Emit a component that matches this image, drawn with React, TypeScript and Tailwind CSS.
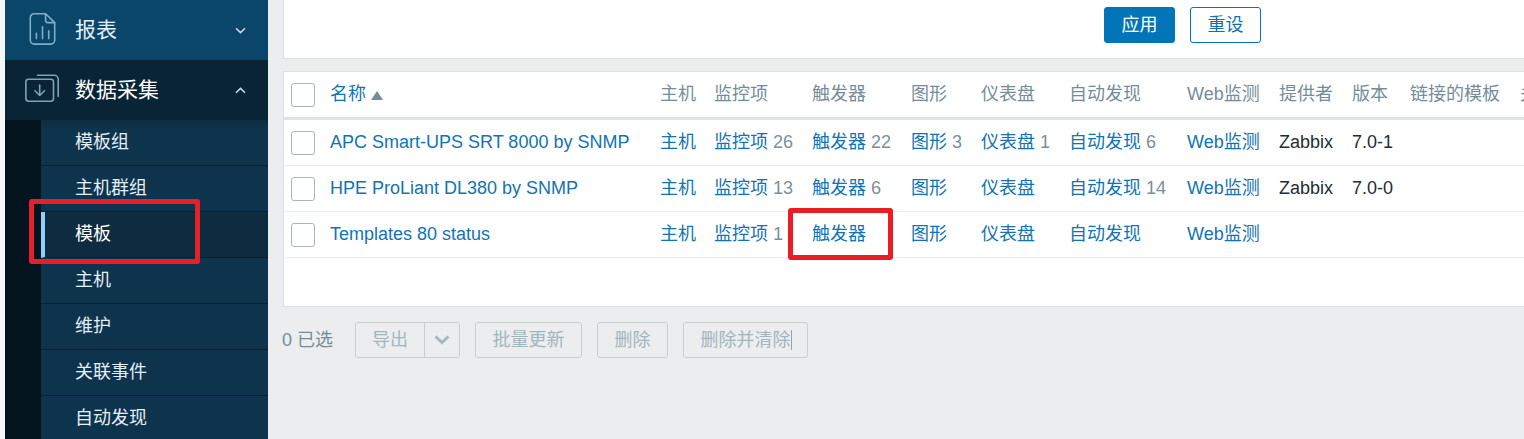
import type { ReactNode } from 'react';

const COLUMNS =
  'grid grid-cols-[46px_330px_54px_98px_99px_70px_88px_118px_92px_73px_58px_110px_120px] items-center';

type Template = {
  name: string;
  items: string;
  triggers: string;
  graphs: string;
  dashboards: string;
  discovery: string;
  vendor: string;
  version: string;
};

const templates: Template[] = [
  { name: 'APC Smart-UPS SRT 8000 by SNMP', items: '26', triggers: '22', graphs: '3', dashboards: '1', discovery: '6', vendor: 'Zabbix', version: '7.0-1' },
  { name: 'HPE ProLiant DL380 by SNMP', items: '13', triggers: '6', graphs: '', dashboards: '', discovery: '14', vendor: 'Zabbix', version: '7.0-0' },
  { name: 'Templates 80 status', items: '1', triggers: '', graphs: '', dashboards: '', discovery: '', vendor: '', version: '' },
];

const submenu = ['模板组', '主机群组', '模板', '主机', '维护', '关联事件', '自动发现'];

function ReportIcon() {
  return (
    <svg width="36" height="36" viewBox="0 0 36 36" fill="none" stroke="#7eaecb" strokeWidth="1.6" strokeLinecap="round" strokeLinejoin="round">
      <path d="M20.6 2.7H9.3a4 4 0 0 0-4 4v22.4a4 4 0 0 0 4 4h16.4a4 4 0 0 0 4-4V11.6L20.6 2.7Z" />
      <path d="M20.6 2.7v6.9a2 2 0 0 0 2 2h7.1M11.4 22.2v5.4M17.5 15.8v11.8M23.7 19.7v7.9" />
    </svg>
  );
}

function CollectionIcon() {
  return (
    <svg width="36" height="36" viewBox="0 0 36 36" fill="none" stroke="#7fa3b5" strokeWidth="1.6" strokeLinecap="round" strokeLinejoin="round">
      <rect x="0.9" y="8.2" width="27.6" height="22" rx="2.6" />
      <path d="M12.6 4.3h16.6a4 4 0 0 1 4 4v17.2M14.7 14v10.4M9.9 19.8l4.8 4.7 4.8-4.7" />
    </svg>
  );
}

function Chevron({ up = false }: { up?: boolean }) {
  return (
    <svg width="11" height="7" viewBox="0 0 11 7" fill="none" stroke="#c9dbe6" strokeWidth="1.5">
      <path d={up ? 'M1 5.8 5.5 1.4 10 5.8' : 'M1 1.2 5.5 5.6 10 1.2'} />
    </svg>
  );
}

function Checkbox() {
  return <span className="mt-0.5 ml-[7px] block size-6 rounded-[3px] border border-[#a8b5bd] bg-white" />;
}

function Link({ children, count = '' }: { children: ReactNode; count?: string }) {
  return (
    <span>
      <span className="text-[#1274b0]">{children}</span>
      {count && <span className="text-[#7d8f99]"> {count}</span>}
    </span>
  );
}

function FooterButton({ children, className }: { children: ReactNode; className: string }) {
  return (
    <button className={`flex h-9 items-center justify-center rounded-[3px] border border-[#c8d0d4] text-[#a5b5bd] ${className}`}>
      {children}
    </button>
  );
}

function Sidebar() {
  return (
    <aside className="ml-[5px] flex w-[263px] shrink-0 flex-col bg-[#03141e]">
      <div className="flex h-[60px] shrink-0 items-center bg-[#0a466a] pr-[22px] pl-5 text-[21px] text-[#e3eef5]">
        <div className="w-[50px] pb-0.5"><ReportIcon /></div>
        <span className="grow">报表</span>
        <Chevron />
      </div>
      <div className="flex h-[60px] shrink-0 items-center bg-[#092435] pr-[22px] pl-5 text-[21px] text-white">
        <div className="w-[50px] pb-0.5"><CollectionIcon /></div>
        <span className="grow">数据采集</span>
        <Chevron up />
      </div>
      <nav className="ml-9 flex flex-col">
        {submenu.map((item) => (
          <div
            key={item}
            className={
              item === '模板'
                ? 'flex h-[46px] shrink-0 items-center border-b border-[#06202e] border-l-4 border-l-[#8ccfff] bg-[#0d2c40] pb-px pl-[30px] text-white'
                : 'flex h-[46px] shrink-0 items-center border-b border-[#06202e] bg-[#0e344d] pb-px pl-[34px] text-[#e3eef5] first:bg-linear-to-b first:from-[#0c2b40] first:to-[#0e344d] first:to-20%'
            }
          >
            {item}
          </div>
        ))}
      </nav>
    </aside>
  );
}

export default function App() {
  return (
    <div className="relative flex h-[439px] w-[1524px] overflow-hidden bg-[#f6f7f8] font-['Liberation_Sans','Noto_Sans_CJK_SC',sans-serif] text-[18px] leading-6 whitespace-nowrap">
      <Sidebar />
      <main className="flex min-w-0 grow flex-col overflow-hidden bg-[#ebedef] pl-[15px]">
        <section className="flex h-[59px] shrink-0 gap-[15px] border-b border-l border-[#dde1e3] bg-white pt-[7px] pl-[820px]">
          <button className="h-9 w-[71px] rounded-[3px] border border-[#0275b8] bg-[#0275b8] text-white">应用</button>
          <button className="h-9 w-[71px] rounded-[3px] border border-[#0275b8] text-[#0f70aa]">重设</button>
        </section>
        <section className="mt-3 h-[236px] shrink-0 overflow-hidden border border-r-0 border-[#dde1e3] bg-white">
          <div className={`${COLUMNS} h-12 w-[1356px] border-b-3 border-[#dce2e6] pb-px text-[#768d99]`}>
            <Checkbox />
            <span className="flex items-center gap-[5px] text-[#1274b0]">
              名称
              <svg width="12" height="9" viewBox="0 0 12 9" className="mt-[3px]"><path d="M0 9 6 0l6 9Z" fill="#768d99" /></svg>
            </span>
            <span>主机</span>
            <span>监控项</span>
            <span>触发器</span>
            <span>图形</span>
            <span>仪表盘</span>
            <span>自动发现</span>
            <span>Web监测</span>
            <span>提供者</span>
            <span>版本</span>
            <span>链接的模板</span>
            <span>关联的模板</span>
          </div>
          {templates.map((t) => (
            <div key={t.name} className={`${COLUMNS} h-[46px] w-[1356px] border-b border-[#e8ecee] pb-px text-[#1f2c33]`}>
              <Checkbox />
              <Link>{t.name}</Link>
              <Link>主机</Link>
              <Link count={t.items}>监控项</Link>
              <Link count={t.triggers}>触发器</Link>
              <Link count={t.graphs}>图形</Link>
              <Link count={t.dashboards}>仪表盘</Link>
              <Link count={t.discovery}>自动发现</Link>
              <Link>Web监测</Link>
              <span>{t.vendor}</span>
              <span>{t.version}</span>
            </div>
          ))}
        </section>
        <footer className="mt-[15px] flex items-center">
          <span className="-ml-px w-[73px] text-[#768d99]">0 已选</span>
          <FooterButton className="w-[70px] rounded-r-none">导出</FooterButton>
          <FooterButton className="-ml-px w-9 rounded-l-none">
            <svg width="16" height="10" viewBox="0 0 16 10" fill="none" stroke="#a9b8c0" strokeWidth="3"><path d="m1.5 1.5 6.5 6 6.5-6" /></svg>
          </FooterButton>
          <FooterButton className="ml-[15px] w-[107px]">批量更新</FooterButton>
          <FooterButton className="ml-[15px] w-[71px]">删除</FooterButton>
          <FooterButton className="ml-[15px] w-[125px]">
            删除并清除<span className="-mr-px h-5 w-px bg-[#8ea3ae]" />
          </FooterButton>
        </footer>
      </main>
      <div className="absolute top-[199px] left-[29px] h-[65px] w-[171px] rounded-[3px] border-5 border-[#e4202a]" />
      <div className="absolute top-[208px] left-[788px] h-[52px] w-[105px] rounded-[3px] border-5 border-[#ec1c24]" />
    </div>
  );
}
